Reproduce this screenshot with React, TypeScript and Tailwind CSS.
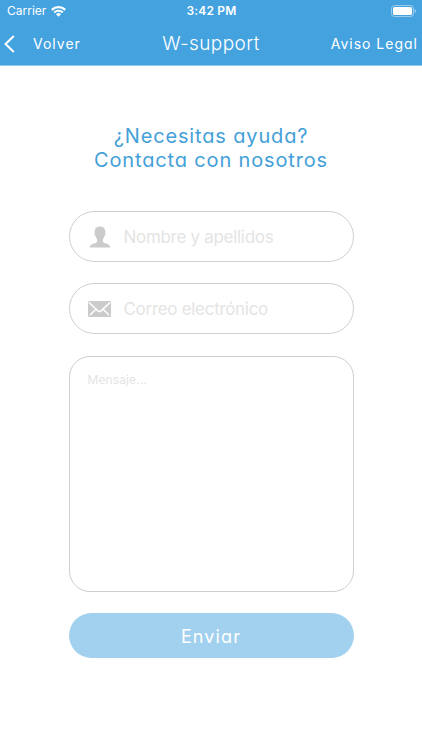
import type { ReactNode } from 'react'

const muli = "font-['Inter',sans-serif] [font-feature-settings:'cv11']"

function StatusBar() {
  return (
    <div className="grid h-[22px] grid-cols-3 items-center pr-[6px] pl-[7px] font-['Inter',sans-serif] text-white">
      <div className="flex items-center gap-[5px]">
        <span className="text-[12px] leading-none">Carrier</span>
        <svg className="h-[11px] w-[15px]" viewBox="0 0 15 11" fill="none" stroke="currentColor">
          <path d="M.8 3.9a9.6 9.6 0 0 1 13.4 0" strokeWidth="2.2" />
          <path d="M3.2 6.5a6.1 6.1 0 0 1 8.6 0" strokeWidth="2.1" />
          <path d="M7.5 10.8 5 8.3a3.5 3.5 0 0 1 5 0z" fill="currentColor" stroke="none" />
        </svg>
      </div>
      <span className="text-center text-[12px] leading-none font-semibold tracking-[0.15px] whitespace-nowrap">
        3:42 PM
      </span>
      <svg className="h-[12px] w-[25px] justify-self-end" viewBox="0 0 25 12">
        <rect x="0.5" y="0.5" width="22" height="11" rx="3" fill="none" stroke="white" strokeOpacity="0.45" />
        <rect x="2" y="2" width="19" height="8" rx="1.6" fill="white" />
        <path d="M23.7 4v4a2.2 2.2 0 0 0 0-4z" fill="white" fillOpacity="0.5" />
      </svg>
    </div>
  )
}

function NavBar() {
  return (
    <nav className={`grid h-[43px] grid-cols-[1fr_auto_1fr] items-center pr-[4px] pl-[4px] text-white ${muli}`}>
      <button className="flex items-center gap-[18px]">
        <svg className="h-[18px] w-[11px]" viewBox="0 0 11 18" fill="none" stroke="currentColor" strokeWidth="2">
          <path d="M9.8 1 1.5 9l8.3 8" />
        </svg>
        <span className="text-[14px] leading-none tracking-[1px]">Volver</span>
      </button>
      <h1 className="text-[19px] leading-none font-light tracking-[0.4px]">W-support</h1>
      <button className="justify-self-end text-[14px] leading-none tracking-[1px]">Aviso Legal</button>
    </nav>
  )
}

function Field({ icon, placeholder }: { icon: ReactNode; placeholder: string }) {
  return (
    <label className="flex h-[51px] items-center rounded-[25.5px] border border-[#cfcfcf] pl-[18px]">
      <span className="flex w-6 justify-center text-[#cbcbcb]">{icon}</span>
      <input
        type="text"
        placeholder={placeholder}
        className="ml-[12px] w-[210px] pt-[2px] font-['Inter',sans-serif] text-[17px] tracking-[-0.3px] outline-none placeholder:text-[#e4e4e4]"
      />
    </label>
  )
}

const personIcon = (
  <svg className="h-[22px] w-[22px]" viewBox="0 0 22 22" fill="currentColor">
    <path d="M11 .4c3.500 0 5.300 2.100 5.300 5.600 0 .7.300 1.200.1 2.200-.2.900-.7 1.200-.9 1.900-.4 1.500-1 2.400-1.600 3.200-.2 2.200-.1 3.100 1.500 3.700 2.700 1 5.400 1.200 5.900 4.400H.7c.5-3.200 3.200-3.400 5.900-4.400 1.600-.6 1.700-1.500 1.500-3.700-.6-.8-1.200-1.700-1.600-3.200-.2-.7-.7-1-.9-1.900-.2-1 .1-1.500.1-2.200C5.700 2.500 7.500.4 11 .4z" />
  </svg>
)

const mailIcon = (
  <svg className="h-[16px] w-[23px]" viewBox="0 0 23 16">
    <rect width="23" height="16" rx="1.5" fill="currentColor" />
    <path
      d="M1 1.500 10 9.900q1.500 1.300 3 0l9-8.400M2 14l6-5.800M21 14l-6-5.800"
      fill="none"
      stroke="white"
      strokeWidth="1.500"
    />
  </svg>
)

export default function App() {
  return (
    <div className="min-h-[750px] w-full bg-white">
      <header className="h-[66px] border-b border-[#91caee] bg-[#44a2df]">
        <StatusBar />
        <NavBar />
      </header>

      <main className="mx-auto w-[285px] pt-[57.5px]">
        <h2 className={`text-center text-[20px] leading-[24.5px] tracking-[0.85px] text-[#44a0d8] ${muli}`}>
          ¿Necesitas ayuda?
          <br />
          Contacta con nosotros
        </h2>

        <form className="mt-[38.5px] flex flex-col">
          <Field icon={personIcon} placeholder="Nombre y apellidos" />
          <div className="mt-[21px] flex flex-col">
            <Field icon={mailIcon} placeholder="Correo electrónico" />
          </div>
          <textarea
            placeholder="Mensaje..."
            className="mt-[22px] h-[236px] resize-none rounded-[21px] border border-[#cfcfcf] px-[18px] py-[14px] font-['Inter',sans-serif] text-[12px] tracking-[0.1px] outline-none placeholder:text-[#e4e4e4]"
          />
          <button
            type="button"
            className={`mt-[21px] h-[45px] rounded-full bg-[#a2d1ef] pt-px text-[18px] tracking-[1.1px] text-white ${muli}`}
          >
            Enviar
          </button>
        </form>
      </main>
    </div>
  )
}
